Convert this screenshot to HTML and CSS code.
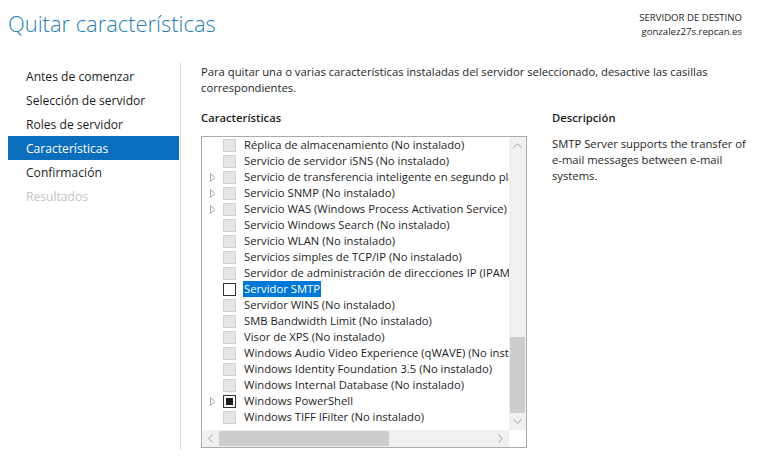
FILE: index.html
```html
<!DOCTYPE html>
<html lang="es">
<head>
<meta charset="utf-8">
<title>Quitar características</title>
<link rel="stylesheet" href="styles.css">
</head>
<body>
<div class="page">
  <header class="header">
    <h1 class="title">Quitar características</h1>
    <div class="dest">
      <div class="dest-label">SERVIDOR DE DESTINO</div>
      <div class="dest-name">gonzalez27s.repcan.es</div>
    </div>
  </header>
  <div class="main">
    <nav class="nav">
      <div class="nav-item">Antes de comenzar</div>
      <div class="nav-item">Selección de servidor</div>
      <div class="nav-item">Roles de servidor</div>
      <div class="nav-item active">Características</div>
      <div class="nav-item">Confirmación</div>
      <div class="nav-item disabled">Resultados</div>
    </nav>
    <section class="content">
      <p class="intro">Para quitar una o varias características instaladas del servidor seleccionado, desactive las casillas correspondientes.</p>
      <div class="columns">
        <div class="col-list">
          <div class="heading">Características</div>
          <div class="listbox">
            <div class="viewport">
              <div class="row"><span class="exp"></span><span class="cb dis"></span><span class="lbl">Réplica de almacenamiento (No instalado)</span></div>
              <div class="row"><span class="exp"></span><span class="cb dis"></span><span class="lbl">Servicio de servidor iSNS (No instalado)</span></div>
              <div class="row"><span class="exp"><svg width="6" height="9" viewBox="0 0 6 9"><path d="M0.5 0.5 L5 4.5 L0.5 8.5 Z" fill="none" stroke="#a6a6a6" stroke-width="1"/></svg></span><span class="cb dis"></span><span class="lbl">Servicio de transferencia inteligente en segundo plano (BITS) (No instalado)</span></div>
              <div class="row"><span class="exp"><svg width="6" height="9" viewBox="0 0 6 9"><path d="M0.5 0.5 L5 4.5 L0.5 8.5 Z" fill="none" stroke="#a6a6a6" stroke-width="1"/></svg></span><span class="cb dis"></span><span class="lbl">Servicio SNMP (No instalado)</span></div>
              <div class="row"><span class="exp"><svg width="6" height="9" viewBox="0 0 6 9"><path d="M0.5 0.5 L5 4.5 L0.5 8.5 Z" fill="none" stroke="#a6a6a6" stroke-width="1"/></svg></span><span class="cb dis"></span><span class="lbl">Servicio WAS (Windows Process Activation Service) (No instalado)</span></div>
              <div class="row"><span class="exp"></span><span class="cb dis"></span><span class="lbl">Servicio Windows Search (No instalado)</span></div>
              <div class="row"><span class="exp"></span><span class="cb dis"></span><span class="lbl">Servicio WLAN (No instalado)</span></div>
              <div class="row"><span class="exp"></span><span class="cb dis"></span><span class="lbl">Servicios simples de TCP/IP (No instalado)</span></div>
              <div class="row"><span class="exp"></span><span class="cb dis"></span><span class="lbl">Servidor de administración de direcciones IP (IPAM) (No instalado)</span></div>
              <div class="row"><span class="exp"></span><span class="cb on"></span><span class="lbl sel">Servidor SMTP</span></div>
              <div class="row"><span class="exp"></span><span class="cb dis"></span><span class="lbl">Servidor WINS (No instalado)</span></div>
              <div class="row"><span class="exp"></span><span class="cb dis"></span><span class="lbl">SMB Bandwidth Limit (No instalado)</span></div>
              <div class="row"><span class="exp"></span><span class="cb dis"></span><span class="lbl">Visor de XPS (No instalado)</span></div>
              <div class="row"><span class="exp"></span><span class="cb dis"></span><span class="lbl">Windows Audio Video Experience (qWAVE) (No instalado)</span></div>
              <div class="row"><span class="exp"></span><span class="cb dis"></span><span class="lbl">Windows Identity Foundation 3.5 (No instalado)</span></div>
              <div class="row"><span class="exp"></span><span class="cb dis"></span><span class="lbl">Windows Internal Database (No instalado)</span></div>
              <div class="row"><span class="exp"><svg width="6" height="9" viewBox="0 0 6 9"><path d="M0.5 0.5 L5 4.5 L0.5 8.5 Z" fill="none" stroke="#a6a6a6" stroke-width="1"/></svg></span><span class="cb part"></span><span class="lbl">Windows PowerShell</span></div>
              <div class="row"><span class="exp"></span><span class="cb dis"></span><span class="lbl">Windows TIFF IFilter (No instalado)</span></div>
            </div>
            <div class="vscroll">
              <div class="arrow"><svg width="9" height="5" viewBox="0 0 9 5"><path d="M0.5 4.5 L4.5 0.8 L8.5 4.5" fill="none" stroke="#a0a0a0" stroke-width="1"/></svg></div>
              <div class="vtrack"><div class="vthumb"></div></div>
              <div class="arrow"><svg width="9" height="5" viewBox="0 0 9 5"><path d="M0.5 0.5 L4.5 4.2 L8.5 0.5" fill="none" stroke="#a0a0a0" stroke-width="1"/></svg></div>
            </div>
            <div class="hscroll">
              <div class="arrow"><svg width="5" height="9" viewBox="0 0 5 9"><path d="M4.5 0.5 L0.8 4.5 L4.5 8.5" fill="none" stroke="#a0a0a0" stroke-width="1"/></svg></div>
              <div class="htrack"><div class="hthumb"></div></div>
              <div class="arrow"><svg width="5" height="9" viewBox="0 0 5 9"><path d="M0.5 0.5 L4.2 4.5 L0.5 8.5" fill="none" stroke="#a0a0a0" stroke-width="1"/></svg></div>
            </div>
            <div class="corner"></div>
          </div>
        </div>
        <div class="col-desc">
          <div class="heading">Descripción</div>
          <p class="desc">SMTP Server supports the transfer of e-mail messages between e-mail systems.</p>
        </div>
      </div>
    </section>
  </div>
</div>
</body>
</html>
```
FILE: styles.css
```css
* { box-sizing: border-box; }
html, body { margin: 0; padding: 0; background: #fff; }
body {
  font-family: "Open Sans", "Noto Sans", sans-serif;
  font-size: 11.25px;
  color: #1e1e1e;
  width: 764px;
  height: 460px;
  overflow: hidden;
}
.page { display: flex; flex-direction: column; height: 460px; }
.header {
  display: flex;
  justify-content: space-between;
  align-items: flex-start;
  padding: 6px 22px 0 8px;
  height: 63px;
}
.title {
  margin: 0;
  font-size: 21.9px;
  font-weight: 300;
  color: #2a7db3;
  line-height: 36px;
}
.dest { text-align: right; padding-top: 5px; font-size: 9.6px; line-height: 14px; color: #1e1e1e; }
.main { display: flex; flex: 1; padding-bottom: 10px; }
.nav {
  width: 181px;
  padding: 1px 0 0 8px;
  border-right: 1px solid #d4d4d4;
  font-size: 12.1px;
}
.nav-item {
  height: 24px;
  line-height: 25px;
  padding-left: 18px;
  margin-right: 1px;
}
.nav-item.active { background: #0a6ebd; color: #fff; }
.nav-item.disabled { color: #c4c4c4; }
.content { flex: 1; padding: 1px 0 0 20px; }
.intro { margin: 0; line-height: 16px; width: 520px; }
.columns { display: flex; gap: 25px; margin-top: 14px; }
.col-list { width: 326px; flex: none; }
.col-desc { width: 200px; flex: none; }
.heading { font-weight: 600; line-height: 16px; margin-bottom: 10px; }
.desc { margin: 0; line-height: 16px; }
.listbox {
  display: grid;
  grid-template-columns: 307px 17px;
  grid-template-rows: 293px 17px;
  border: 1px solid #ababab;
  width: 326px;
  height: 312px;
}
.viewport { overflow: hidden; white-space: nowrap; min-width: 0; }
.row { display: flex; align-items: center; height: 16px; }
.exp { width: 21px; flex: none; display: flex; align-items: center; padding-left: 8px; }
.exp svg { display: block; }
.cb {
  width: 13px; height: 13px; flex: none;
  border: 1px solid #d0d0d0;
  background: #e6e6e6;
  margin-right: 7px;
  display: flex; align-items: center; justify-content: center;
}
.cb.on { background: #fff; border-color: #333; }
.cb.part { background: #fff; border-color: #333; }
.cb.part::after { content: ""; width: 7px; height: 7px; background: #1e1e1e; }
.lbl { flex: none; line-height: 16px; padding: 0 1px; }
.lbl.sel { background: #0078d7; color: #fff; }
.vscroll { background: #f0f0f0; display: flex; flex-direction: column; }
.hscroll { background: #f0f0f0; display: flex; }
.corner { background: #fff; }
.arrow { flex: none; width: 17px; height: 17px; display: flex; align-items: center; justify-content: center; }
.vtrack { flex: 1; display: flex; flex-direction: column; justify-content: flex-end; }
.vthumb { height: 76px; margin: 0 1px; background: #cdcdcd; }
.htrack { flex: 1; display: flex; align-items: stretch; }
.hthumb { width: 170px; margin: 1px 0 1px 0; background: #cdcdcd; }
```
